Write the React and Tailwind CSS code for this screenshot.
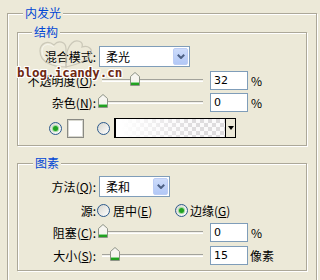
import React from "react";

function Thumb({ className }) {
  return (
    <svg width="10" height="14" viewBox="0 0 10 14" className={className}>
      <path d="M5 0.5 L9.5 4.5 V13.5 H0.5 V4.5 Z" fill="#f6f5f0" stroke="#8e9488" />
      <rect x="1" y="11" width="8" height="2" fill="#21a121" />
      <rect x="1" y="10" width="8" height="1" fill="#8fd68f" />
    </svg>
  );
}

function Slider({ thumb }) {
  return (
    <div className="relative w-[108px] h-[19px] ml-[1px] shrink-0">
      <div className="absolute left-[5px] right-[2px] top-[8px] h-[3px] border-t border-[#a3a39b] border-b border-b-white bg-[#f1f0ea]" />
      <Thumb className={`absolute top-[1px] ${thumb}`} />
    </div>
  );
}

function Radio({ checked }) {
  return (
    <span className="w-[13px] h-[13px] rounded-full border border-[#2c5a8c] bg-[linear-gradient(135deg,#d6d5ce,#ffffff)] flex items-center justify-center shrink-0">
      {checked && (
        <span className="w-[5px] h-[5px] rounded-full bg-[#21a121] shadow-[0_0_0_1px_#9fdc9f]" />
      )}
    </span>
  );
}

function Select({ value, w }) {
  return (
    <div className={`flex items-center h-[21px] bg-white border border-[#7f9db9] shrink-0 ${w}`}>
      <span className="flex-1 pl-[6px] text-[12px] leading-none">{value}</span>
      <span className="w-[15px] h-[17px] mr-[1px] rounded-[2px] bg-[linear-gradient(#cddcfb,#b2c8f6)] border border-[#bccdf5] flex items-center justify-center">
        <svg width="8" height="5" viewBox="0 0 8 5">
          <path d="M0.8 0.8 L4 4 L7.2 0.8" stroke="#4d6185" strokeWidth="2" fill="none" />
        </svg>
      </span>
    </div>
  );
}

function Num({ value }) {
  return (
    <div className="w-[38px] h-[19px] ml-[5px] bg-white border border-[#7f9db9] pl-[3px] flex items-center text-[11px] leading-none shrink-0 [font-family:'DejaVu_Sans',sans-serif]">
      {value}
    </div>
  );
}

function Label({ text, k }) {
  return (
    <span className="w-[78px] text-right text-[12px] leading-none shrink-0">
      {text}
      {k && (
        <>
          (<span className="underline">{k}</span>)
        </>
      )}
      :
    </span>
  );
}

function Legend({ children, left }) {
  return (
    <span className={`absolute -top-[8px] ${left} px-[2px] h-[14px] leading-[14px] text-[12px] text-[#0046d5] bg-[#ece9d8]`}>
      {children}
    </span>
  );
}

export default function App() {
  return (
    <div className="relative w-[320px] h-[280px] overflow-hidden bg-[#ece9d8] pl-[7px] pt-[13px] text-black [font-family:'Noto_Sans_CJK_SC',sans-serif]">
      {/* 内发光 */}
      <div className="relative w-[310px] h-[300px] border border-[#aca899] shadow-[inset_1px_1px_0_#fff,1px_1px_0_#fff]">
        <Legend left="left-[15px]">内发光</Legend>

        {/* 结构 */}
        <div className="relative ml-[9px] mt-[18px] w-[290px] h-[114px] border border-[#aca899] shadow-[inset_1px_1px_0_#fff,1px_1px_0_#fff] pt-[13px]">
          <Legend left="left-[14px]">结构</Legend>
          <div className="flex items-center">
            <Label text="混合模式" />
            <div className="ml-[3px]">
              <Select value="柔光" w="w-[91px]" />
            </div>
          </div>
          <div className="flex items-center h-[19px] mt-[4px]">
            <Label text="不透明度" k="O" />
            <Slider thumb="left-[33px]" />
            <Num value="32" />
            <span className="ml-[3px] text-[12px] leading-none">%</span>
          </div>
          <div className="flex items-center h-[19px] mt-[3px]">
            <Label text="杂色" k="N" />
            <Slider thumb="left-[1px]" />
            <Num value="0" />
            <span className="ml-[3px] text-[12px] leading-none">%</span>
          </div>
          <div className="flex items-center h-[20px] mt-[6px]">
            <span className="ml-[31px]">
              <Radio checked />
            </span>
            <span className="ml-[5px] w-[17px] h-[19px] bg-white border border-[#8a8a84] shadow-[inset_0_0_0_1px_#d8d8d0]" />
            <span className="ml-[13px]">
              <Radio />
            </span>
            <div className="ml-[4px] w-[122px] h-[20px] flex border border-black border-l-2">
              <div className="flex-1 [background:linear-gradient(to_right,#fff_5%,rgba(255,255,255,0)_70%),repeating-conic-gradient(#dedcde_0_25%,#fbfafb_0_50%)_0_0/8px_8px]" />
              <div className="w-[10px] border-l border-black bg-[#ece9d8] flex items-center justify-center">
                <svg width="6" height="4" viewBox="0 0 6 4">
                  <path d="M0 0 H6 L3 4 Z" fill="#000" />
                </svg>
              </div>
            </div>
          </div>
        </div>

        {/* 图素 */}
        <div className="relative ml-[9px] mt-[17px] w-[290px] h-[108px] border border-[#aca899] shadow-[inset_1px_1px_0_#fff,1px_1px_0_#fff] pt-[12px]">
          <Legend left="left-[15px]">图素</Legend>
          <div className="flex items-center">
            <Label text="方法" k="Q" />
            <div className="ml-[3px]">
              <Select value="柔和" w="w-[71px]" />
            </div>
          </div>
          <div className="flex items-center h-[13px] mt-[7px]">
            <span className="w-[78px] text-right text-[12px] leading-none shrink-0">源:</span>
            <span className="ml-[1px] w-[78px] flex items-center">
              <Radio />
              <span className="ml-[3px] text-[12px] leading-none">
                居中(<span className="underline">E</span>)
              </span>
            </span>
            <Radio checked />
            <span className="ml-[2px] text-[12px] leading-none">
              边缘(<span className="underline">G</span>)
            </span>
          </div>
          <div className="flex items-center h-[19px] mt-[6px]">
            <Label text="阻塞" k="C" />
            <Slider thumb="left-[1px]" />
            <Num value="0" />
            <span className="ml-[3px] text-[12px] leading-none">%</span>
          </div>
          <div className="flex items-center h-[19px] mt-[4px]">
            <Label text="大小" k="S" />
            <Slider thumb="left-[13px]" />
            <Num value="15" />
            <span className="ml-[2px] text-[12px] leading-none">像素</span>
          </div>
        </div>
      </div>

      {/* watermark */}
      <svg className="absolute left-[36px] top-[37px]" width="64" height="34" viewBox="0 0 64 34">
        <g fill="none" stroke="#c3c0b1" strokeWidth="1.2" opacity="0.8">
          <path d="M30 30 C18 30 4 26 4 14 C4 6 12 3 18 8 C22 3 30 4 30 12 C30 18 30 24 30 30 Z" />
          <path d="M30 30 C30 20 30 12 36 6 C40 2 48 4 46 10 C52 8 58 12 54 18 C50 24 40 28 30 30 Z" />
        </g>
        <g fill="none" stroke="#ffffff" strokeWidth="0.8" opacity="0.7">
          <path d="M29 28 C19 28 6 24 6 14 C6 8 12 5 18 10" />
        </g>
      </svg>
      <span className="absolute left-[17px] top-[65px] text-[12.5px] leading-[15px] font-bold text-[#6e2812] [font-family:'DejaVu_Sans_Mono',monospace] [text-shadow:1px_0_#fff,-1px_0_#fff,0_1px_#fff,0_-1px_#fff,1px_1px_#fff,-1px_-1px_#fff,1px_-1px_#fff,-1px_1px_#fff]">
        blog.icandy.cn
      </span>
    </div>
  );
}
